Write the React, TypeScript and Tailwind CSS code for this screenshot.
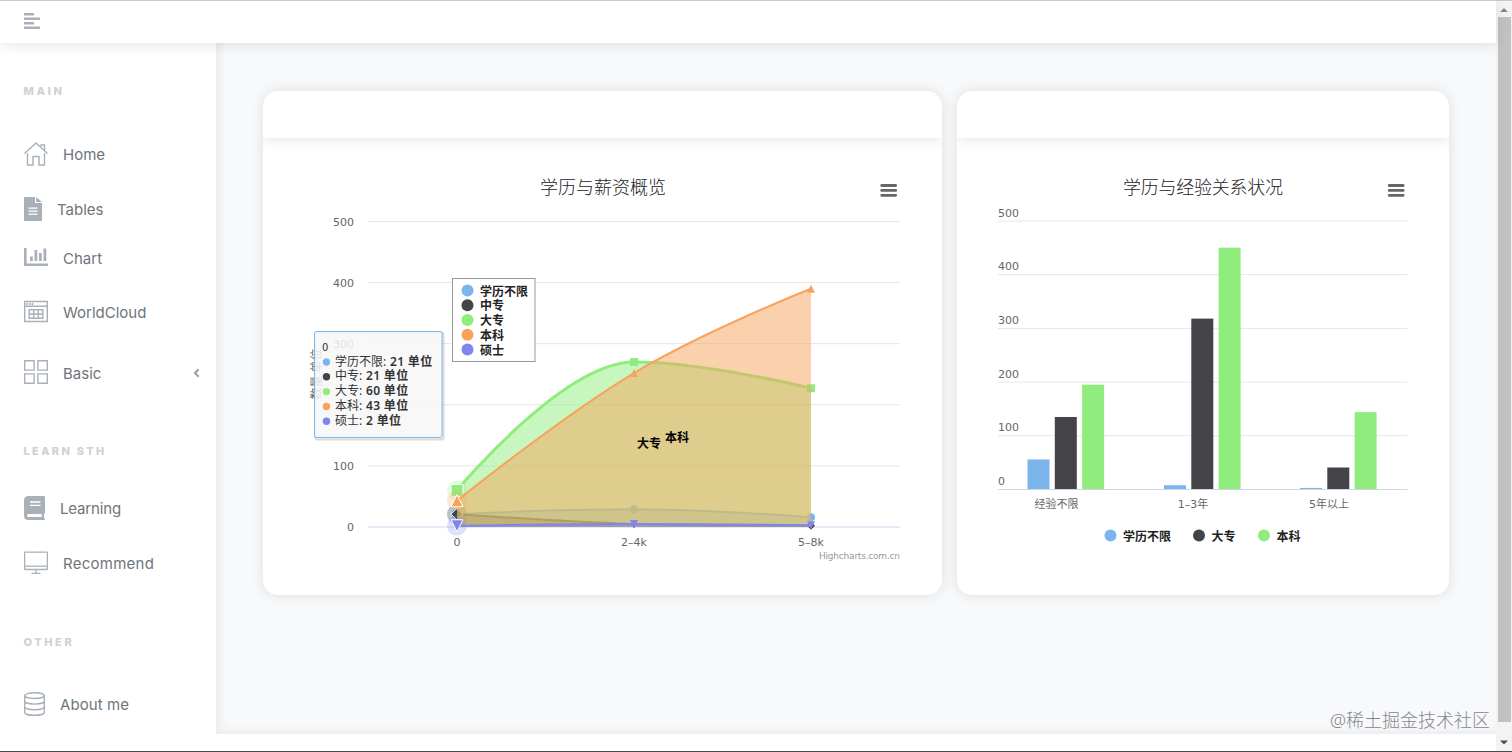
import { type ReactNode } from "react";

type Point = readonly [number, number];
type MarkerShape = "circle" | "diamond" | "square" | "triangle" | "triangle-down";

interface AreaSeries {
  readonly name: string;
  readonly color: string;
  readonly marker: MarkerShape;
  readonly values: readonly [number, number, number];
  readonly strokeWidth: number;
}

const AREA_X = [457, 634, 811];
const AREA_BASE = 527;
const AREA_CATEGORIES = ["0", "2–4k", "5–8k"];

const areaSeries: readonly AreaSeries[] = [
  { name: "学历不限", color: "#7cb5ec", marker: "circle", values: [21, 29, 16], strokeWidth: 2 },
  { name: "中专", color: "#434348", marker: "diamond", values: [21, 5, 2], strokeWidth: 2 },
  { name: "大专", color: "#90ed7d", marker: "square", values: [60, 270, 227], strokeWidth: 3 },
  { name: "本科", color: "#f7a35c", marker: "triangle", values: [43, 252, 390], strokeWidth: 2 },
  { name: "硕士", color: "#8085e9", marker: "triangle-down", values: [2, 5, 3], strokeWidth: 2 },
];

const columnCategories = [
  { name: "经验不限", x: 1056.5, bars: [55, 134, 194] },
  { name: "1–3年", x: 1193, bars: [7, 317, 449] },
  { name: "5年以上", x: 1329, bars: [2, 40, 143] },
];
const COLUMN_BASE = 489;
const columnColors = ["#7cb5ec", "#434348", "#90ed7d"];

const latin = "font-['DejaVu_Sans','Noto_Sans_CJK_SC',sans-serif]";
const cjk = "font-['Noto_Sans','Noto_Sans_CJK_SC',sans-serif]";

export default function App() {
  return (
    <div className="flex h-[752px] w-[1512px] overflow-hidden border-b border-[#4b4b4d] bg-white">
      <div className="flex min-w-0 flex-1 flex-col">
        <header className="z-10 flex h-[43px] shrink-0 items-center border-t border-[#c9c9cb] bg-white pl-[23.5px] shadow-[0_3px_12px_rgba(0,0,0,0.09)]">
          <svg className="mb-0.5 h-4 w-4 text-[#abb0b8]" viewBox="0 0 16 16" fill="currentColor">
            <path d="M0 0h10v2.4H0zM0 4.5h16v2.4H0zM0 9h10v2.4H0zM0 13.5h16v2.5H0z" />
          </svg>
        </header>
        <div className="flex h-[691px] shrink-0">
          <Sidebar />
          <main className="flex flex-1 items-start gap-[15px] bg-[#f8f9fb] pt-12 pl-[47px] shadow-[inset_4px_-3px_10px_rgba(0,0,0,0.06)]">
            <Card className="w-[679px]">
              <AreaChart />
            </Card>
            <Card className="w-[491.5px]">
              <ColumnChart />
            </Card>
          </main>
        </div>
        <div className="h-[17px] bg-white" />
      </div>
      <ScrollBar />
      <div
        className={`absolute top-[708px] left-[1330px] text-[18px] leading-6 font-light whitespace-nowrap text-[#85878b] ${cjk}`}
      >
        @稀土掘金技术社区
      </div>
    </div>
  );
}

function Card({ children, className }: { readonly children: ReactNode; readonly className: string }) {
  return (
    <section
      className={`h-[504px] shrink-0 overflow-hidden rounded-[15px] bg-white shadow-[0_0_14px_rgba(0,0,0,0.11)] ${className}`}
    >
      <div className="h-[47px] shadow-[0_2px_12px_rgba(0,0,0,0.1)]" />
      {children}
    </section>
  );
}

function ScrollBar() {
  return (
    <div className="flex w-4 flex-col items-center border-t border-[#c9c9cb] bg-[#f3f3f3]">
      <svg className="h-4 w-4 shrink-0" viewBox="0 0 16 16">
        <path d="M4 11h8L8 7z" fill="#8b8b8b" />
      </svg>
      <div className="h-[705px] w-[13px] shrink-0 bg-[#c1c1c1]" />
      <svg className="mt-3 h-4 w-4 shrink-0" viewBox="0 0 16 16">
        <path d="M4 6.5h8l-4 4z" fill="#505050" />
      </svg>
    </div>
  );
}

function Sidebar() {
  return (
    <nav className="flex w-[216px] shrink-0 flex-col bg-white pt-[33px] pl-[23.5px] font-['Inter',sans-serif]">
      <SectionLabel className="tracking-[2.7px]">MAIN</SectionLabel>
      <NavItem className="mt-[33px] gap-[15.5px]" icon={<HomeIcon />} label="Home" />
      <NavItem className="mt-[25px] gap-[15.5px]" icon={<FileIcon />} label="Tables" />
      <NavItem className="mt-[19px] gap-[15.5px]" icon={<ChartIcon />} label="Chart" />
      <NavItem className="mt-6 gap-[15.5px]" icon={<CalendarIcon />} label="WorldCloud" />
      <NavItem className="mt-[31px] gap-[15.5px]" icon={<GridIcon />} label="Basic">
        <svg className="mr-4 ml-auto h-[10px] w-[7px]" viewBox="0 0 7 10" fill="none">
          <path d="M5.6 1.2 2 5l3.6 3.8" stroke="#999da3" strokeWidth="2" />
        </svg>
      </NavItem>
      <SectionLabel className="mt-12 tracking-[2.3px]">LEARN STH</SectionLabel>
      <NavItem className="mt-[27px] gap-[15.5px] tracking-[-0.15px]" icon={<BookIcon />} label="Learning" />
      <NavItem className="mt-[25px] gap-[15.5px] tracking-[0.25px]" icon={<MonitorIcon />} label="Recommend" />
      <SectionLabel className="mt-[49px] tracking-[2.6px]">OTHER</SectionLabel>
      <NavItem className="mt-8 gap-[15.5px] tracking-[0.1px]" icon={<DatabaseIcon />} label="About me" />
    </nav>
  );
}

function SectionLabel({ children, className }: { readonly children: string; readonly className: string }) {
  return (
    <h2 className={`flex h-[30px] shrink-0 items-center text-[11px] font-extrabold text-[#ced1d5] ${className}`}>
      {children}
    </h2>
  );
}

function NavItem({
  children,
  className,
  icon,
  label,
}: {
  readonly children?: ReactNode;
  readonly className: string;
  readonly icon: ReactNode;
  readonly label: string;
}) {
  return (
    <a className={`flex h-[30px] shrink-0 items-center text-[15px] text-[#6f757b] ${className}`}>
      <span className="shrink-0 text-[#aab0b8]">{icon}</span>
      <span className="pt-0.5 whitespace-nowrap">{label}</span>
      {children}
    </a>
  );
}

function HomeIcon() {
  return (
    <svg className="h-6 w-6" viewBox="0 0 24 24" fill="none" stroke="currentColor" strokeWidth="1.4">
      <path d="M.5 11.5 12 1l11.5 10.5M17 4.2V3h3.5v5.2M3.5 11v12H9v-8.5h6V23h5.5V11" />
    </svg>
  );
}

function FileIcon() {
  return (
    <svg className="h-6 w-[18px]" viewBox="0 0 18 24">
      <path d="M0 0h11v6h7v18H0zM12.3 0 18 5H12.3z" fill="currentColor" />
      <path d="M4.5 11.2h9M4.5 14.2h9M4.5 17.2h9" stroke="#fff" strokeWidth="1.3" />
    </svg>
  );
}

function ChartIcon() {
  return (
    <svg className="mb-0.5 h-5 w-6" viewBox="0 0 24 20" fill="currentColor">
      <path d="M0 1h2.6v15.4H24V19H0zM6 9.5h2.8V14H6zM10.5 3h2.8v11h-2.8zM15 6h2.8v8H15zM19.5 1.5h2.8V14h-2.8z" />
    </svg>
  );
}

function CalendarIcon() {
  return (
    <svg className="h-6 w-6" viewBox="0 0 24 24" fill="none" stroke="currentColor" strokeWidth="1.4">
      <path d="M.7 1.5h22.6v20H.7zM.7 6.3h22.6M5.2 9.7h13.6v8.6H5.2zM5.2 14h13.6M9.7 9.7v8.6M14.3 9.7v8.6" />
      <path d="M2.3 4h1.6M5 4h1.6M7.7 4h1.6" strokeWidth="1.8" />
    </svg>
  );
}

function GridIcon() {
  return (
    <svg className="mb-0.5 h-6 w-6" viewBox="0 0 24 24" fill="none" stroke="currentColor" strokeWidth="1.4">
      <path d="M.7.7h9.4v9.4H.7zM13.9.7h9.4v9.4h-9.4zM.7 13.9h9.4v9.4H.7zM13.9 13.9h9.4v9.4h-9.4z" />
    </svg>
  );
}

function BookIcon() {
  return (
    <svg className="h-6 w-[21px]" viewBox="0 0 21 24">
      <path
        d="M4.5 0H20q1 0 1 1v15.5q0 .8-.7 1.2-.5 2.4 0 4.5.7.3.7 1t-1 .8H4.5Q0 24 0 19.5v-15Q0 0 4.5 0z"
        fill="currentColor"
      />
      <path d="M6 6h10.5M6 9.3h10.5" stroke="#fff" strokeWidth="1.3" />
      <path d="M4.5 18h13.2v3H4.5a1.5 1.5 0 0 1 0-3z" fill="#fff" />
    </svg>
  );
}

function MonitorIcon() {
  return (
    <svg className="h-6 w-6" viewBox="0 0 24 24" fill="none" stroke="currentColor" strokeWidth="1.3">
      <path d="M1.3 1.1h21.4q.7 0 .7.7v16q0 .7-.7.7H1.3q-.7 0-.7-.7v-16q0-.7.7-.7zM.7 15.2h22.6M12 18.5v3.6M7.5 22.3h9" />
    </svg>
  );
}

function DatabaseIcon() {
  return (
    <svg className="h-6 w-[21px]" viewBox="0 0 21 24" fill="none" stroke="currentColor" strokeWidth="1.4">
      <ellipse cx="10.5" cy="3.6" rx="9.8" ry="2.9" />
      <path d="M.7 3.6v16.8c0 1.6 4.4 2.9 9.8 2.9s9.8-1.3 9.8-2.9V3.6M.7 9.2c0 1.6 4.4 2.9 9.8 2.9s9.8-1.3 9.8-2.9M.7 14.8c0 1.6 4.4 2.9 9.8 2.9s9.8-1.3 9.8-2.9" />
    </svg>
  );
}

function MenuButton({ x }: { readonly x: number }) {
  return (
    <path
      d={`M${x} 185.5h14M${x} 190.4h14M${x} 195.3h14`}
      stroke="#666"
      strokeWidth="2.8"
      strokeLinecap="round"
    />
  );
}

function Marker({
  color,
  point: [x, y],
  radius,
  shape,
  stroke,
}: {
  readonly color: string;
  readonly point: Point;
  readonly radius: number;
  readonly shape: MarkerShape;
  readonly stroke?: string;
}) {
  const r = radius;
  if (shape === "circle") {
    return <circle cx={x} cy={y} r={r} fill={color} stroke={stroke} />;
  }
  const paths = {
    diamond: `M${x} ${y - r}L${x + r} ${y}L${x} ${y + r}L${x - r} ${y}z`,
    square: `M${x - r} ${y - r}h${2 * r}v${2 * r}h${-2 * r}z`,
    triangle: `M${x} ${y - r}L${x + r} ${y + r}H${x - r}z`,
    "triangle-down": `M${x - r} ${y - r}H${x + r}L${x} ${y + r}z`,
  };
  return <path d={paths[shape]} fill={color} stroke={stroke} />;
}

function AreaChart() {
  return (
    <svg className={`block h-[457px] w-[679px] ${cjk}`} viewBox="263 138 679 457">
      <text className="text-[18px] font-light" x="603" y="193.5" textAnchor="middle" fill="#222">
        学历与薪资概览
      </text>
      <MenuButton x={881.7} />
      <g className={`text-[11px] ${latin}`} fill="#666">
        {/* the tooltip covers the label of the 200 line */}
        {[500, 400, 300, 200, 100, 0].map((value, index) => (
          <g key={value}>
            <path
              d={`M368 ${221.5 + index * 61.1}h532`}
              stroke={value === 0 ? "#ccd6eb" : "#e6e6e6"}
            />
            {value !== 200 && (
              <text x="354" y={225.5 + index * 61.1} textAnchor="end">
                {value}
              </text>
            )}
          </g>
        ))}
        {AREA_CATEGORIES.map((name, index) => (
          <text key={name} x={AREA_X[index]} y="546" textAnchor="middle">
            {name}
          </text>
        ))}
      </g>
      <text className="text-[12px]" transform="translate(321 374) rotate(-90)" textAnchor="middle" fill="#666">
        数量 单位
      </text>

      {areaSeries.map((series) => {
        const points = toPoints(series.values);
        const line = splinePath(points);
        return (
          <g key={series.name}>
            <path d={`${line}V${AREA_BASE}H${AREA_X[0]}z`} fill={series.color} fillOpacity="0.5" />
            <path d={line} fill="none" stroke={series.color} strokeWidth={series.strokeWidth} />
            <circle cx={points[0][0]} cy={points[0][1]} r="10" fill={series.color} fillOpacity="0.25" />
            {points.slice(1).map((point) => (
              <Marker key={point[0]} color={series.color} point={point} radius={4} shape={series.marker} />
            ))}
            <Marker color={series.color} point={points[0]} radius={6} shape={series.marker} stroke="#fff" />
          </g>
        );
      })}

      <g className="text-[12px] font-semibold" fill="#000" textAnchor="middle">
        <text x="649" y="447.5">大专</text>
        <text x="677" y="442">本科</text>
      </g>

      <rect x="452.5" y="278.5" width="82.5" height="83" fill="#fff" stroke="#999" />
      {areaSeries.map((series, index) => (
        <g key={series.name}>
          <circle cx="467.5" cy={290.4 + index * 14.8} r="6" fill={series.color} />
          <text className="text-[12px] font-semibold" x="480" y={295.5 + index * 14.8} fill="#222">
            {series.name}
          </text>
        </g>
      ))}

      <text className={`text-[9px] ${latin}`} x="900" y="558.5" textAnchor="end" textLength="81" fill="#999">
        Highcharts.com.cn
      </text>

      <rect x="315.5" y="332.5" width="128" height="107" rx="2" fill="none" stroke="#000" strokeOpacity="0.15" strokeWidth="2" />
      <rect
        x="314.5"
        y="331.5"
        width="127.5"
        height="106"
        rx="2"
        fill="#f7f7f7"
        fillOpacity="0.85"
        stroke="#7cb5ec"
      />
      <text className={`text-[10px] ${latin}`} x="322" y="350.5" fill="#333">
        0
      </text>
      {areaSeries.map((series, index) => (
        <g key={series.name}>
          <circle cx="326.5" cy={362 + index * 14.8} r="3.7" fill={series.color} />
          <text className="text-[12px]" x="335" y={365.5 + index * 14.8} fill="#333">
            {series.name}:{" "}
            <tspan className="font-semibold" dx="0.6" letterSpacing="0.35">
              {series.values[0]} 单位
            </tspan>
          </text>
        </g>
      ))}
    </svg>
  );
}

function ColumnChart() {
  return (
    <svg className={`block h-[457px] w-[492px] ${cjk}`} viewBox="957 138 492 457">
      <text className="text-[18px] font-light" x="1203" y="193.5" textAnchor="middle" textLength="160" fill="#222">
        学历与经验关系状况
      </text>
      <MenuButton x={1389.2} />
      <g className={`text-[11px] ${latin}`} fill="#666">
        {[500, 400, 300, 200, 100, 0].map((value, index) => (
          <g key={value}>
            <path
              d={`M998 ${221 + index * 53.7}h409.5`}
              stroke={value === 0 ? "#ccd6eb" : "#e6e6e6"}
            />
            <text x="998" y={value === 0 ? 484.5 : 216.5 + index * 53.7}>
              {value}
            </text>
          </g>
        ))}
      </g>
      {columnCategories.map((category) => (
        <g key={category.name}>
          {category.bars.map((value, index) => {
            const height = value * 0.5375;
            return (
              <rect
                key={columnColors[index]}
                x={category.x - 29 + index * 27.3}
                y={COLUMN_BASE - height}
                width="22"
                height={height}
                fill={columnColors[index]}
              />
            );
          })}
          <text className={`text-[11px] ${latin}`} x={category.x} y="508" textAnchor="middle" fill="#666">
            {category.name}
          </text>
        </g>
      ))}
      {[
        { name: "学历不限", x: 1110.5 },
        { name: "大专", x: 1199 },
        { name: "本科", x: 1264 },
      ].map((item, index) => (
        <g key={item.name}>
          <circle cx={item.x} cy="535.5" r="6" fill={columnColors[index]} />
          <text className="text-[12px] font-semibold" x={item.x + 12.5} y="540.5" fill="#222">
            {item.name}
          </text>
        </g>
      ))}
    </svg>
  );
}

function toPoints(values: readonly number[]): Point[] {
  return values.map((value, index) => [AREA_X[index], AREA_BASE - value * 0.611] as const);
}

// Three-point spline; the middle tangent is flattened so the curve never overshoots a data point.
function splinePath([first, mid, last]: readonly Point[]): string {
  const leftX = (1.5 * mid[0] + first[0]) / 2.5;
  const rightX = (1.5 * mid[0] + last[0]) / 2.5;
  let leftY = (1.5 * mid[1] + first[1]) / 2.5;
  let rightY = (1.5 * mid[1] + last[1]) / 2.5;
  const correction = ((rightY - leftY) * (rightX - mid[0])) / (rightX - leftX) + mid[1] - rightY;

  leftY += correction;
  rightY += correction;

  if (leftY < first[1] && leftY < mid[1]) {
    leftY = Math.min(first[1], mid[1]);
    rightY = 2 * mid[1] - leftY;
  }
  if (rightY < last[1] && rightY < mid[1]) {
    rightY = Math.min(last[1], mid[1]);
    leftY = 2 * mid[1] - rightY;
  }

  return `M${first[0]} ${first[1]}C${first[0]} ${first[1]} ${leftX} ${leftY} ${mid[0]} ${mid[1]}C${rightX} ${rightY} ${last[0]} ${last[1]} ${last[0]} ${last[1]}`;
}
